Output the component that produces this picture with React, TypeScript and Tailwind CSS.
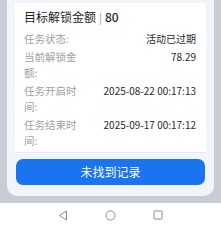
export default function App() {
  const rows = [
    { label: "任务状态:", value: "活动已过期" },
    { label: "当前解锁金额:", value: "78.29" },
    { label: "任务开启时间:", value: "2025-08-22 00:17:13" },
    { label: "任务结束时间:", value: "2025-09-17 00:17:12" },
  ];

  return (
    <div
      className="w-[221px] h-[228px] bg-[#c9ccd5] flex flex-col overflow-hidden"
      style={{ fontFamily: '"Noto Sans CJK SC", "Noto Sans", sans-serif' }}
    >
      <div className="h-[196px] px-[7px] shrink-0">
        <div className="h-full bg-[#f1f4f9] rounded-b-[10px] pt-[3px] px-[8px] flex flex-col">
          <div className="bg-white border-b border-[#e6e9ef] pl-[9px] pr-[9px] pt-[5px] pb-[4px] h-[150px]">
            <div className="h-[18px] flex items-center text-[12px] text-[#1f1f1f] leading-[18px]">
              目标解锁金额
              <span className="mx-[3px] text-[#999] text-[11px]">|</span>
              <span className="font-medium">80</span>
            </div>
            <div className="mt-[5px] flex flex-col gap-[2px]">
              {rows.map((r, i) => (
                <div key={i} className="flex justify-between">
                  <div className="w-[58px] text-[10.5px] leading-[16px] text-[#a0a0a4]">{r.label}</div>
                  <div className="text-[10px] leading-[16px] text-[#2a2a2a] pr-[1px]">{r.value}</div>
                </div>
              ))}
            </div>
          </div>
          <button className="mt-[6px] ml-[1px] mr-[1px] h-[26px] rounded-[7px] bg-[#1a74f0] text-white text-[12px] flex items-center justify-center">
            未找到记录
          </button>
        </div>
      </div>
      <div className="h-[7px] shrink-0" />
      <div className="flex-1 bg-white flex items-center justify-center gap-[37px] pb-[1px]">
        <svg width="10" height="11" viewBox="0 0 10 11" fill="none" stroke="#8a8a8a" strokeWidth="1">
          <path d="M8.5 1 L1.5 5.5 L8.5 10 Z" strokeLinejoin="round" />
        </svg>
        <svg width="11" height="11" viewBox="0 0 11 11" fill="none" stroke="#8a8a8a" strokeWidth="1">
          <circle cx="5.5" cy="5.5" r="4.6" />
        </svg>
        <svg width="10" height="10" viewBox="0 0 10 10" fill="none" stroke="#8a8a8a" strokeWidth="1">
          <rect x="1" y="1" width="8" height="8" rx="0.5" />
        </svg>
      </div>
    </div>
  );
}
